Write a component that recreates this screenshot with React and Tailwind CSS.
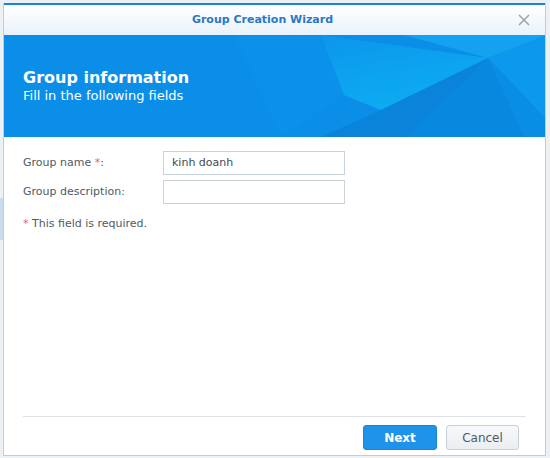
import React from "react";

const font = { fontFamily: '"DejaVu Sans", Verdana, sans-serif' };

const Banner = () => (
  <div className="relative h-[102px] bg-[#0a8ee8] overflow-hidden">
    <svg className="absolute inset-0" width="543" height="102" viewBox="0 0 543 102">
      <defs>
        <linearGradient id="cy" x1="0" y1="0" x2="0.4" y2="1">
          <stop offset="0" stopColor="#0d96eb" />
          <stop offset="1" stopColor="#0cacf2" />
        </linearGradient>
      </defs>
      <polygon points="230,0 317,0 340,60 277,102" fill="#0b91e9" />
      <polygon points="317,0 484,23 377,75 340,60" fill="url(#cy)" />
      <polygon points="400,0 543,0 484,23" fill="#14a2f0" />
      <polygon points="484,23 543,0 543,85" fill="#0c98ed" />
      <polygon points="377,75 484,23 404,102 317,102" fill="#0a84db" />
      <polygon points="484,23 543,85 543,102 404,102" fill="#0a8de5" />
      <polygon points="484,23 520,102 404,102" fill="#0988df" />
    </svg>
    <div className="relative pl-[19px] pt-[33px] text-white">
      <div className="text-[16px] font-bold leading-[20px]">Group information</div>
      <div className="text-[13px] leading-[16px]">Fill in the following fields</div>
    </div>
  </div>
);

const Field = ({ label, required, value }) => (
  <div className="flex items-center h-[24px]">
    <div className="w-[140px] text-[11px] text-[#505a64]">
      {label}
      {required && <span className="text-[#f05a5a]"> *</span>}:
    </div>
    <div className="w-[182px] h-[24px] border border-[#c8d2dc] bg-white px-[8px] text-[11px] leading-[22px] text-[#404a54]">
      {value}
    </div>
  </div>
);

export default function App() {
  return (
    <div className="w-[550px] h-[458px] bg-[#eef1f4] overflow-hidden relative" style={font}>
      <div className="absolute left-0 top-[198px] w-[3px] h-[42px] bg-[#c9dcee]" />
      <div className="ml-[3px] mt-[3px] w-[543px] h-[453px] bg-white border border-[#c6ccd2] border-t-0 flex flex-col">
        <div className="h-[2px] bg-[#1a82d8]" />
        <div className="h-[30px] flex items-center justify-center pr-[24px] relative bg-gradient-to-b from-white to-[#e9f2fb]">
          <span className="text-[11px] font-bold text-[#2a78c6]">Group Creation Wizard</span>
          <svg className="absolute right-[15px] top-[9px]" width="12" height="12" viewBox="0 0 12 12">
            <path d="M1 1 L11 11 M11 1 L1 11" stroke="#9aa4ae" strokeWidth="1.5" />
          </svg>
        </div>
        <Banner />
        <div className="px-[19px] pt-[14px] flex flex-col gap-[5px]">
          <Field label="Group name" required value="kinh doanh" />
          <Field label="Group description" value="" />
          <div className="mt-[7px] text-[11px] text-[#505a64]">
            <span className="text-[#f05a5a]">*</span> This field is required.
          </div>
        </div>
        <div className="flex-1" />
        <div className="mx-[19px] border-t border-[#dfe3e7]" />
        <div className="flex justify-end gap-[9px] px-[26px] pt-[8px] pb-[5px]">
          <button className="w-[74px] h-[25px] rounded-[3px] bg-[#1f93ea] border border-[#1a84d6] text-white text-[12px] font-bold">
            Next
          </button>
          <button className="w-[73px] h-[25px] rounded-[3px] bg-gradient-to-b from-[#f7f9fb] to-[#eaeef2] border border-[#c8d0d8] text-[#505a64] text-[12px]">
            Cancel
          </button>
        </div>
      </div>
    </div>
  );
}
